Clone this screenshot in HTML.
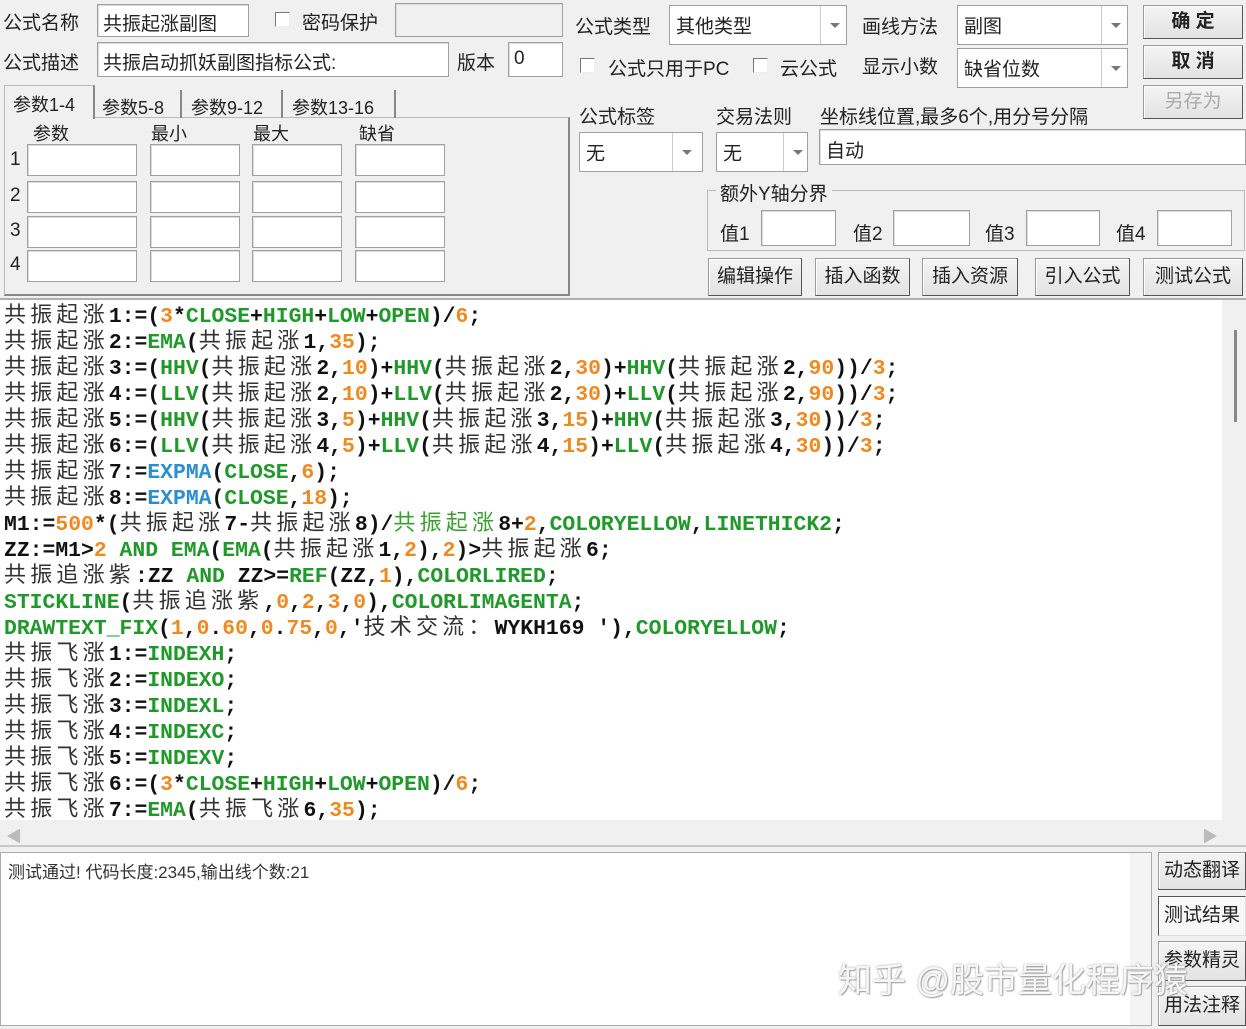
<!DOCTYPE html>
<html><head><meta charset="utf-8">
<style>
*{box-sizing:border-box;margin:0;padding:0}
body{width:1246px;height:1029px;background:#f0f0f0;position:relative;overflow:hidden;font-family:"Liberation Sans","Noto Sans CJK SC",sans-serif;font-size:19px;color:#222}
.a{position:absolute;white-space:nowrap}
.in{position:absolute;background:#fff;border:1px solid #a0a0a0;box-shadow:inset 1px 1px 0 #ddd}
.cb{position:absolute;width:15px;height:15px;background:#fff;border:1px solid #777;border-right-color:#eee;border-bottom-color:#eee}
.combo{position:absolute;background:#fff;border:1px solid #a0a0a0}
.combo .arr{position:absolute;right:0;top:0;bottom:0;width:26px;border-left:1px solid #ccc;background:#fff}
.combo .arr:after{content:"";position:absolute;left:9px;top:50%;margin-top:-2px;border-left:5px solid transparent;border-right:5px solid transparent;border-top:5px solid #777}
.combo span{position:absolute;left:6px;top:50%;transform:translateY(-50%)}
.btn{position:absolute;background:linear-gradient(#f4f4f4,#e2e2e2);border:1px solid #999;border-right-color:#555;border-bottom-color:#555;box-shadow:inset 1px 1px 0 #fff;text-align:center;font-size:19px;color:#222}
.code{position:absolute;left:0;top:300px;width:1222px;height:520px;background:#fff;overflow:hidden;font-family:"Liberation Mono",monospace;font-weight:bold;font-size:21.4px;color:#111}
.code div{height:26px;line-height:26px;padding-left:4px;white-space:pre}
.c{font-family:"Noto Sans CJK SC",sans-serif;font-weight:normal;font-size:22px;letter-spacing:4.2px;color:#333}
.g{color:#1f9a2a}.o{color:#f08a20}.b{color:#2a8fd0}.gc{color:#3aa030;font-family:"Noto Sans CJK SC",sans-serif;font-weight:normal;font-size:22px;letter-spacing:4.2px}
</style></head><body>
<!-- top left -->
<div class="a" style="left:3px;top:8px">公式名称</div>
<div class="in" style="left:97px;top:4px;width:152px;height:33px"></div>
<div class="a" style="left:103px;top:9px">共振起涨副图</div>
<div class="cb" style="left:275px;top:12px"></div>
<div class="a" style="left:302px;top:8px">密码保护</div>
<div class="in" style="left:395px;top:3px;width:168px;height:34px;background:#f0f0f0"></div>
<div class="a" style="left:3px;top:48px">公式描述</div>
<div class="in" style="left:97px;top:42px;width:352px;height:35px"></div>
<div class="a" style="left:103px;top:48px">共振启动抓妖副图指标公式:</div>
<div class="a" style="left:457px;top:48px">版本</div>
<div class="in" style="left:508px;top:42px;width:55px;height:35px"></div>
<div class="a" style="left:514px;top:48px">0</div>
<!-- tabs -->
<div style="position:absolute;left:4px;top:117px;width:566px;height:179px;border:1px solid #bbb;border-right:2px solid #888;border-bottom:2px solid #888;background:#f0f0f0"></div>
<div style="position:absolute;left:4px;top:85px;width:91px;height:34px;border:1px solid #bbb;border-bottom:none;border-right:2px solid #888;background:#f0f0f0"></div>
<div class="a" style="left:13px;top:91px;font-size:18px">参数1-4</div>
<div class="a" style="left:102px;top:94px;font-size:18px">参数5-8</div>
<div class="a" style="left:180px;top:90px;height:28px;border-left:2px solid #888"></div>
<div class="a" style="left:191px;top:94px;font-size:18px">参数9-12</div>
<div class="a" style="left:281px;top:90px;height:28px;border-left:2px solid #888"></div>
<div class="a" style="left:292px;top:94px;font-size:18px">参数13-16</div>
<div class="a" style="left:394px;top:90px;height:28px;border-left:2px solid #888"></div>
<div class="a" style="left:33px;top:120px;font-size:18px">参数</div>
<div class="a" style="left:151px;top:120px;font-size:18px">最小</div>
<div class="a" style="left:253px;top:120px;font-size:18px">最大</div>
<div class="a" style="left:359px;top:120px;font-size:18px">缺省</div>
<div class="a" style="left:10px;top:149px">1</div>
<div class="a" style="left:10px;top:185px">2</div>
<div class="a" style="left:10px;top:220px">3</div>
<div class="a" style="left:10px;top:254px">4</div>
<div class="in" style="left:27px;top:144px;width:110px;height:32px"></div>
<div class="in" style="left:150px;top:144px;width:90px;height:32px"></div>
<div class="in" style="left:252px;top:144px;width:90px;height:32px"></div>
<div class="in" style="left:355px;top:144px;width:90px;height:32px"></div>
<div class="in" style="left:27px;top:181px;width:110px;height:32px"></div>
<div class="in" style="left:150px;top:181px;width:90px;height:32px"></div>
<div class="in" style="left:252px;top:181px;width:90px;height:32px"></div>
<div class="in" style="left:355px;top:181px;width:90px;height:32px"></div>
<div class="in" style="left:27px;top:216px;width:110px;height:32px"></div>
<div class="in" style="left:150px;top:216px;width:90px;height:32px"></div>
<div class="in" style="left:252px;top:216px;width:90px;height:32px"></div>
<div class="in" style="left:355px;top:216px;width:90px;height:32px"></div>
<div class="in" style="left:27px;top:250px;width:110px;height:32px"></div>
<div class="in" style="left:150px;top:250px;width:90px;height:32px"></div>
<div class="in" style="left:252px;top:250px;width:90px;height:32px"></div>
<div class="in" style="left:355px;top:250px;width:90px;height:32px"></div>
<!-- right top -->
<div class="a" style="left:575px;top:12px">公式类型</div>
<div class="combo" style="left:669px;top:5px;width:178px;height:40px"><span>其他类型</span><div class="arr"></div></div>
<div class="a" style="left:862px;top:12px">画线方法</div>
<div class="combo" style="left:957px;top:5px;width:171px;height:40px"><span>副图</span><div class="arr"></div></div>
<div class="btn" style="left:1143px;top:5px;width:100px;height:34px;line-height:32px;font-weight:bold">确 定</div>
<div class="btn" style="left:1143px;top:45px;width:100px;height:34px;line-height:32px;font-weight:bold">取 消</div>
<div class="btn" style="left:1143px;top:85px;width:100px;height:34px;line-height:32px;color:#aaa">另存为</div>
<div class="cb" style="left:580px;top:58px"></div>
<div class="a" style="left:608px;top:54px">公式只用于PC</div>
<div class="cb" style="left:753px;top:58px"></div>
<div class="a" style="left:780px;top:54px">云公式</div>
<div class="a" style="left:862px;top:52px">显示小数</div>
<div class="combo" style="left:957px;top:48px;width:171px;height:40px"><span>缺省位数</span><div class="arr"></div></div>
<div class="a" style="left:579px;top:102px">公式标签</div>
<div class="a" style="left:716px;top:102px">交易法则</div>
<div class="a" style="left:820px;top:102px">坐标线位置,最多6个,用分号分隔</div>
<div class="combo" style="left:579px;top:132px;width:124px;height:40px"><span>无</span><div class="arr" style="width:30px"></div></div>
<div class="combo" style="left:716px;top:132px;width:92px;height:40px"><span>无</span><div class="arr" style="width:24px"></div></div>
<div class="in" style="left:819px;top:129px;width:427px;height:36px"></div>
<div class="a" style="left:826px;top:136px">自动</div>
<div style="position:absolute;left:707px;top:190px;width:538px;height:61px;border:1px solid #bbb"></div>
<div class="a" style="left:716px;top:179px;background:#f0f0f0;padding:0 4px">额外Y轴分界</div>
<div class="a" style="left:720px;top:219px">值1</div>
<div class="in" style="left:761px;top:210px;width:75px;height:36px"></div>
<div class="a" style="left:853px;top:219px">值2</div>
<div class="in" style="left:893px;top:210px;width:77px;height:36px"></div>
<div class="a" style="left:985px;top:219px">值3</div>
<div class="in" style="left:1026px;top:210px;width:74px;height:36px"></div>
<div class="a" style="left:1116px;top:219px">值4</div>
<div class="in" style="left:1157px;top:210px;width:75px;height:36px"></div>
<div class="btn" style="left:708px;top:258px;width:94px;height:38px;line-height:36px">编辑操作</div>
<div class="btn" style="left:815px;top:258px;width:95px;height:38px;line-height:36px">插入函数</div>
<div class="btn" style="left:922px;top:258px;width:96px;height:38px;line-height:36px">插入资源</div>
<div class="btn" style="left:1035px;top:258px;width:95px;height:38px;line-height:36px">引入公式</div>
<div class="btn" style="left:1143px;top:258px;width:100px;height:38px;line-height:36px">测试公式</div>
<!-- code -->
<div style="position:absolute;left:0;top:298px;width:1246px;height:2px;background:#b0b0b0"></div>
<div class="code">
<div><span class="c">共振起涨</span>1:=(<span class="o">3</span>*<span class="g">CLOSE</span>+<span class="g">HIGH</span>+<span class="g">LOW</span>+<span class="g">OPEN</span>)/<span class="o">6</span>;</div>
<div><span class="c">共振起涨</span>2:=<span class="g">EMA</span>(<span class="c">共振起涨</span>1,<span class="o">35</span>);</div>
<div><span class="c">共振起涨</span>3:=(<span class="g">HHV</span>(<span class="c">共振起涨</span>2,<span class="o">10</span>)+<span class="g">HHV</span>(<span class="c">共振起涨</span>2,<span class="o">30</span>)+<span class="g">HHV</span>(<span class="c">共振起涨</span>2,<span class="o">90</span>))/<span class="o">3</span>;</div>
<div><span class="c">共振起涨</span>4:=(<span class="g">LLV</span>(<span class="c">共振起涨</span>2,<span class="o">10</span>)+<span class="g">LLV</span>(<span class="c">共振起涨</span>2,<span class="o">30</span>)+<span class="g">LLV</span>(<span class="c">共振起涨</span>2,<span class="o">90</span>))/<span class="o">3</span>;</div>
<div><span class="c">共振起涨</span>5:=(<span class="g">HHV</span>(<span class="c">共振起涨</span>3,<span class="o">5</span>)+<span class="g">HHV</span>(<span class="c">共振起涨</span>3,<span class="o">15</span>)+<span class="g">HHV</span>(<span class="c">共振起涨</span>3,<span class="o">30</span>))/<span class="o">3</span>;</div>
<div><span class="c">共振起涨</span>6:=(<span class="g">LLV</span>(<span class="c">共振起涨</span>4,<span class="o">5</span>)+<span class="g">LLV</span>(<span class="c">共振起涨</span>4,<span class="o">15</span>)+<span class="g">LLV</span>(<span class="c">共振起涨</span>4,<span class="o">30</span>))/<span class="o">3</span>;</div>
<div><span class="c">共振起涨</span>7:=<span class="b">EXPMA</span>(<span class="g">CLOSE</span>,<span class="o">6</span>);</div>
<div><span class="c">共振起涨</span>8:=<span class="b">EXPMA</span>(<span class="g">CLOSE</span>,<span class="o">18</span>);</div>
<div>M1:=<span class="o">500</span>*(<span class="c">共振起涨</span>7-<span class="c">共振起涨</span>8)/<span class="gc">共振起涨</span>8+<span class="o">2</span>,<span class="g">COLORYELLOW</span>,<span class="g">LINETHICK2</span>;</div>
<div>ZZ:=M1&gt;<span class="o">2</span> <span class="g">AND</span> <span class="g">EMA</span>(<span class="g">EMA</span>(<span class="c">共振起涨</span>1,<span class="o">2</span>),<span class="o">2</span>)&gt;<span class="c">共振起涨</span>6;</div>
<div><span class="c">共振追涨紫</span>:ZZ <span class="g">AND</span> ZZ&gt;=<span class="g">REF</span>(ZZ,<span class="o">1</span>),<span class="g">COLORLIRED</span>;</div>
<div><span class="g">STICKLINE</span>(<span class="c">共振追涨紫</span>,<span class="o">0</span>,<span class="o">2</span>,<span class="o">3</span>,<span class="o">0</span>),<span class="g">COLORLIMAGENTA</span>;</div>
<div><span class="g">DRAWTEXT_FIX</span>(<span class="o">1</span>,<span class="o">0</span>.<span class="o">60</span>,<span class="o">0</span>.<span class="o">75</span>,<span class="o">0</span>,'<span class="c">技术交流：</span>WYKH169 '),<span class="g">COLORYELLOW</span>;</div>
<div><span class="c">共振飞涨</span>1:=<span class="g">INDEXH</span>;</div>
<div><span class="c">共振飞涨</span>2:=<span class="g">INDEXO</span>;</div>
<div><span class="c">共振飞涨</span>3:=<span class="g">INDEXL</span>;</div>
<div><span class="c">共振飞涨</span>4:=<span class="g">INDEXC</span>;</div>
<div><span class="c">共振飞涨</span>5:=<span class="g">INDEXV</span>;</div>
<div><span class="c">共振飞涨</span>6:=(<span class="o">3</span>*<span class="g">CLOSE</span>+<span class="g">HIGH</span>+<span class="g">LOW</span>+<span class="g">OPEN</span>)/<span class="o">6</span>;</div>
<div><span class="c">共振飞涨</span>7:=<span class="g">EMA</span>(<span class="c">共振飞涨</span>6,<span class="o">35</span>);</div>
</div>
<!-- scrollbars -->
<div style="position:absolute;left:1222px;top:300px;width:24px;height:520px;background:#f0f0f0"></div>
<div style="position:absolute;left:1234px;top:330px;width:3px;height:92px;background:#888"></div>
<div style="position:absolute;left:0;top:820px;width:1246px;height:27px;background:#f0f0f0;border-bottom:2px solid #c8c8c8"></div>
<div class="a" style="left:6px;top:823px;color:#bbb;font-size:16px">◀</div>
<div class="a" style="left:1202px;top:823px;color:#bbb;font-size:16px">▶</div>
<!-- bottom -->
<div style="position:absolute;left:0;top:852px;width:1152px;height:174px;background:#fff;border:1px solid #aaa"></div>
<div style="position:absolute;left:1130px;top:853px;width:21px;height:172px;background:#f4f4f4"></div>
<div class="a" style="left:8px;top:858px;font-size:17px;color:#333">测试通过! 代码长度:2345,输出线个数:21</div>
<div class="btn" style="left:1158px;top:852px;width:88px;height:38px;line-height:36px">动态翻译</div>
<div class="btn" style="left:1158px;top:896px;width:88px;height:40px;line-height:38px;background:#f7f7f7;border-color:#555;border-right-color:#ddd;border-bottom-color:#ddd">测试结果</div>
<div class="btn" style="left:1158px;top:941px;width:88px;height:40px;line-height:38px">参数精灵</div>
<div class="btn" style="left:1158px;top:986px;width:88px;height:40px;line-height:38px">用法注释</div>
<div class="a" style="left:838px;top:953px;font-size:34px;color:rgba(255,255,255,0.9);text-shadow:0 0 2px #999,1px 1px 1px #aaa">知乎 @股市量化程序猿</div>
</body></html>
